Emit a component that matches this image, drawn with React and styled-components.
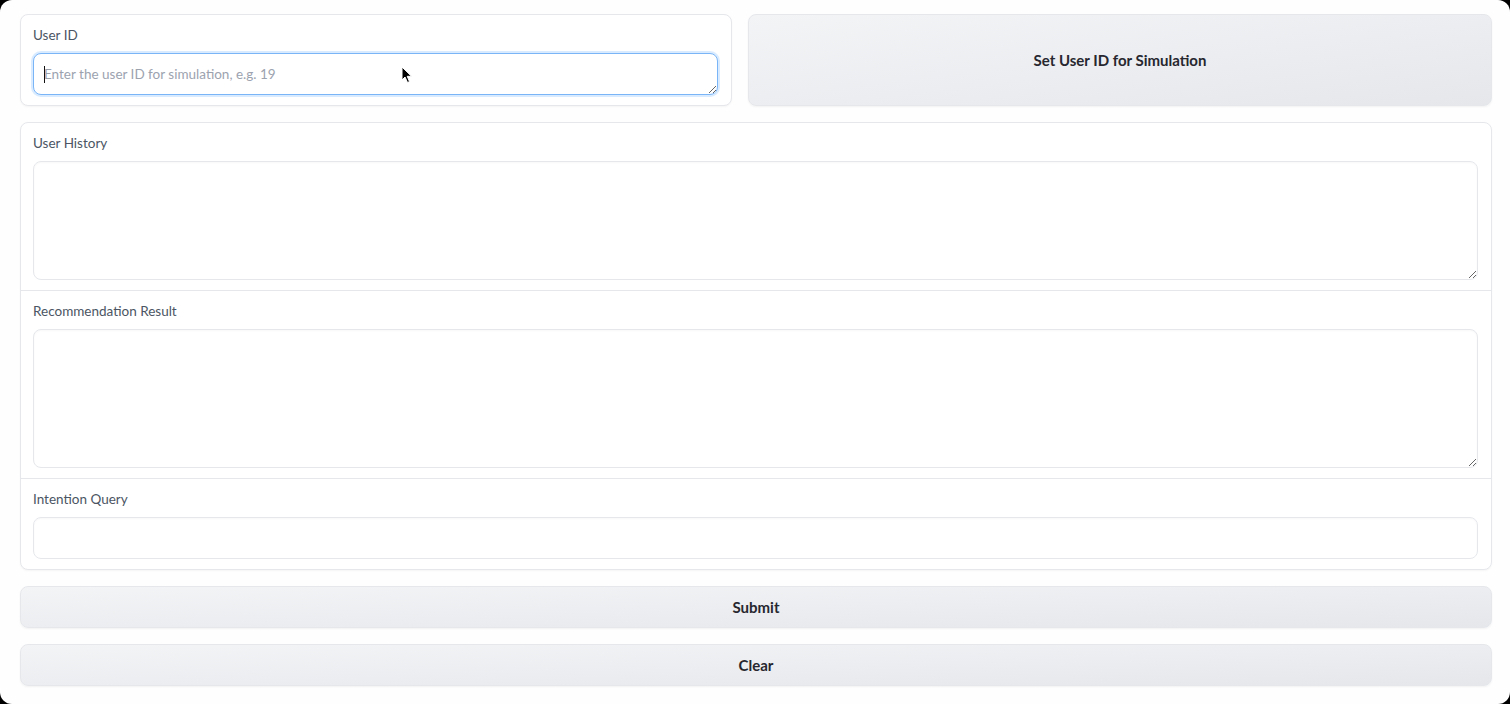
import React from 'react'
import styled, { createGlobalStyle } from 'styled-components'

const Global = createGlobalStyle`
  html, body {
    margin: 0;
    padding: 0;
    background: #000;
  }
  body {
    font-family: Lato, "Noto Sans", "Liberation Sans", sans-serif;
  }
`;

const Window = styled.div`
  position: relative;
  box-sizing: border-box;
  width: 1510px;
  height: 704px;
  background: #fefefe;
  border-radius: 12px;
  padding: 14px 18px 0 20px;
  display: flex;
  flex-direction: column;
  gap: 16px;
  overflow: hidden;
`;

const Row = styled.div`
  display: flex;
  gap: 16px;
  align-items: stretch;
`;

const Block = styled.div`
  box-sizing: border-box;
  background: #fff;
  border: 1px solid #e5e7eb;
  border-radius: 8px;
  box-shadow: 0 1px 2px rgba(0, 0, 0, 0.04);
  width: ${p => p.$width || 'auto'};
  flex: none;
  display: flex;
  flex-direction: column;
`;

const Section = styled.div`
  position: relative;
  padding: 10px 13px 10px 12px;
  display: flex;
  flex-direction: column;
  gap: 8px;
  & + & {
    border-top: 1px solid #e5e7eb;
  }
`;

const Label = styled.span`
  display: block;
  font-size: 13.5px;
  line-height: 20px;
  color: #4b5563;
`;

const Area = styled.textarea`
  display: block;
  box-sizing: border-box;
  width: 100%;
  height: ${p => p.$h}px;
  resize: vertical;
  margin: 0;
  padding: 10px;
  font-family: inherit;
  font-size: 13.5px;
  line-height: 20px;
  color: #1f2937;
  background: #fff;
  border: 1px solid ${p => p.$focus ? '#7ab5f7' : '#e5e7eb'};
  border-radius: 8px;
  outline: none;
  box-shadow: ${p => p.$focus
    ? '0 0 0 2px rgba(147, 197, 253, 0.35)'
    : 'inset 0 1px 2px rgba(0, 0, 0, 0.03)'};
  &::placeholder {
    color: #9ca3af;
  }
`;

const Field = styled.input`
  display: block;
  box-sizing: border-box;
  width: 100%;
  height: 42px;
  margin: 0;
  padding: 10px;
  font-family: inherit;
  font-size: 13.5px;
  background: #fff;
  border: 1px solid #e5e7eb;
  border-radius: 8px;
  outline: none;
  box-shadow: inset 0 1px 2px rgba(0, 0, 0, 0.03);
`;

const Button = styled.button`
  box-sizing: border-box;
  flex: 1 1 auto;
  height: ${p => p.$tall ? 'auto' : '42px'};
  border: 1px solid #e5e7eb;
  border-radius: 8px;
  background: linear-gradient(to bottom right, #f3f4f6, #e5e7eb);
  box-shadow: 0 1px 2px rgba(0, 0, 0, 0.05);
  font-family: inherit;
  font-size: 15px;
  font-weight: 700;
  color: #27272f;
  cursor: pointer;
`;

const Caret = styled.span`
  position: absolute;
  left: 23px;
  top: 51px;
  width: 1px;
  height: 17px;
  background: #111;
`;

const Pointer = styled.svg`
  position: absolute;
  left: 401px;
  top: 66px;
  pointer-events: none;
`;

export default function App() {
  return (
    <>
      <Global />
      <Window>
        <Row>
          <Block $width="712px">
            <Section>
              <Label>User ID</Label>
              <Area $h={42} $focus placeholder="Enter the user ID for simulation, e.g. 19" />
              <Caret />
            </Section>
          </Block>
          <Button $tall>Set User ID for Simulation</Button>
        </Row>

        <Block>
          <Section>
            <Label>User History</Label>
            <Area $h={119} />
          </Section>
          <Section>
            <Label>Recommendation Result</Label>
            <Area $h={139} />
          </Section>
          <Section>
            <Label>Intention Query</Label>
            <Field />
          </Section>
        </Block>

        <Row>
          <Button>Submit</Button>
        </Row>
        <Row>
          <Button>Clear</Button>
        </Row>

        <Pointer width="12" height="18" viewBox="0 0 12 18">
          <path d="M1 1 L1 14 L4 11 L6.5 16.5 L8.5 15.6 L6.2 10.3 L10.5 10.3 Z"
            fill="#000" stroke="#fff" strokeWidth="1" strokeLinejoin="round" />
        </Pointer>
      </Window>
    </>
  );
}
